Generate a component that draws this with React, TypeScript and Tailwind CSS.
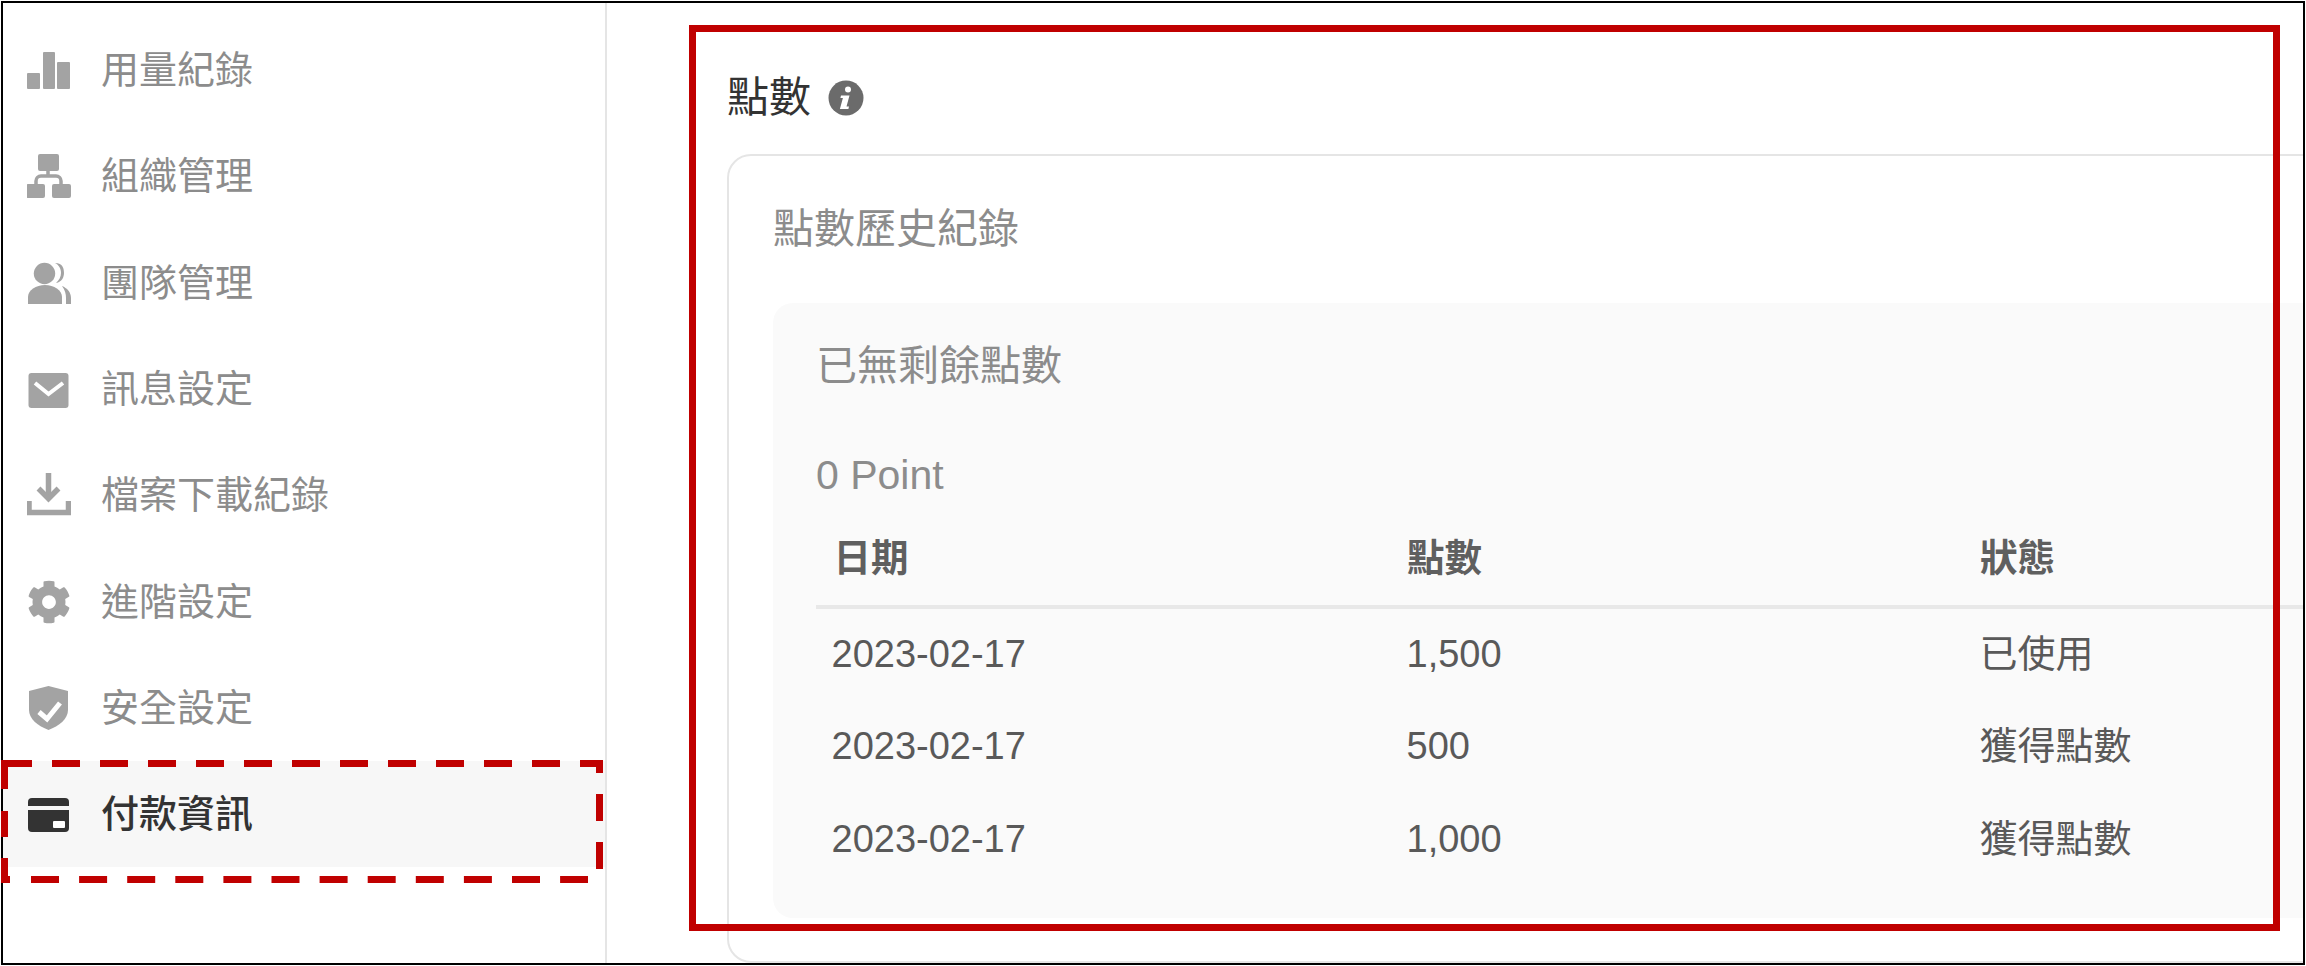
import React from "react";
import { FaCog } from "react-icons/fa";

const G = "#a3a3a3";

function Svg({ children }: { children: React.ReactNode }) {
  return (
    <svg width="44" height="44" viewBox="0 0 44 44" className="shrink-0">
      {children}
    </svg>
  );
}

const ChartIcon = () => (
  <Svg>
    <g fill={G}>
      <rect x="0" y="25" width="13" height="16" rx="1" />
      <rect x="16" y="4" width="12" height="37" rx="1" />
      <rect x="30" y="14" width="13" height="27" rx="1" />
    </g>
  </Svg>
);
const OrgIcon = () => (
  <Svg>
    <g fill={G}>
      <rect x="11" y="0" width="21" height="17" rx="2" />
      <rect x="-1" y="30" width="19" height="14" rx="2" />
      <rect x="25" y="30" width="19" height="14" rx="2" />
    </g>
    <path d="M21 16v5M9 31v-4a5 5 0 0 1 5-5h15a5 5 0 0 1 5 5v4" fill="none" stroke={G} strokeWidth="3.5" />
  </Svg>
);
const TeamIcon = () => (
  <Svg>
    <g fill={G}>
      <circle cx="17.5" cy="12.5" r="10.7" />
      <path d="M1 43v-7c0-7 8-12 17-12s17 5 17 12v7z" />
      <path d="M28 2c8 0 9 6 9 10s-2 9-8 10c3-3 5-6 5-10s-2-8-6-10z" />
      <path d="M35 25c5 2 9 6 9 12v6h-5v-6c0-4-1-8-4-12z" />
    </g>
  </Svg>
);
const MailIcon = () => (
  <Svg>
    <rect x="1.5" y="6" width="40" height="35" rx="3" fill={G} />
    <path d="M8 16l13.5 11L36 16" fill="none" stroke="#fff" strokeWidth="4" />
  </Svg>
);
const DownloadIcon = () => (
  <Svg>
    <g fill="none" stroke={G} strokeWidth="5.5">
      <path d="M21.5 0v25" />
      <path d="M11.5 15.5l10 10 10-10" />
      <path d="M2 28v11.5h39.500V28" />
    </g>
  </Svg>
);
const GearIcon = () => <FaCog size={44} color={G} className="shrink-0" />;
const ShieldIcon = () => (
  <Svg>
    <path d="M21.500 0L41 5v19c0 9-9 16-19.500 20C11 40 2 33 2 24V5z" fill={G} />
    <path d="M12 26l8 7 13-16" fill="none" stroke="#fff" strokeWidth="5" />
  </Svg>
);
const CardIcon = () => (
  <Svg>
    <path d="M1 14v-4a4 4 0 0 1 4-4h33a4 4 0 0 1 4 4v4z" fill="#333" />
    <path d="M1 18h41v18a4 4 0 0 1-4 4H5a4 4 0 0 1-4-4z" fill="#333" />
    <rect x="26" y="29" width="12" height="7" rx="1" fill="#fff" />
  </Svg>
);
const InfoIcon = () => (
  <svg width="36" height="36" viewBox="0 0 36 36" className="shrink-0">
    <circle cx="18" cy="18" r="17.500" fill="#6b6b6b" />
    <circle cx="20" cy="9.500" r="3" fill="#fff" />
    <path d="M13 15.500h8.500l-3 11h2.500l-.6 2.500h-8.500l3-11H12.400z" fill="#fff" />
  </svg>
);

const items: { label: string; icon: React.ReactNode; active?: boolean }[] = [
  { label: "用量紀錄", icon: <ChartIcon /> },
  { label: "組織管理", icon: <OrgIcon /> },
  { label: "團隊管理", icon: <TeamIcon /> },
  { label: "訊息設定", icon: <MailIcon /> },
  { label: "檔案下載紀錄", icon: <DownloadIcon /> },
  { label: "進階設定", icon: <GearIcon /> },
  { label: "安全設定", icon: <ShieldIcon /> },
  { label: "付款資訊", icon: <CardIcon />, active: true },
];

const rows = [
  { h: "h-[90px]", c: ["2023-02-17", "1,500", "已使用"] },
  { h: "h-[93.5px]", c: ["2023-02-17", "500", "獲得點數"] },
  { h: "h-[93.5px]", c: ["2023-02-17", "1,000", "獲得點數"] },
];

export default function App() {
  return (
    <div className="relative w-[2306px] h-[966px] p-px bg-white [font-family:'Liberation_Sans','Noto_Sans_CJK_TC',sans-serif]">
      <div className="flex h-[964px] w-[2304px] overflow-hidden border-2 border-black">
        <aside className="w-[604px] shrink-0 border-r-2 border-[#e5e5e5] pt-[14px]">
          {items.map((it) => (
            <div
              key={it.label}
              className={
                it.active
                  ? "flex h-[106.3px] items-center gap-[30px] bg-[#f7f7f7] pl-[24px] text-[38px] font-medium text-[#333]"
                  : "flex h-[106.3px] items-center gap-[30px] pl-[24px] text-[38px] text-[#8c8c8c]"
              }
            >
              {it.icon}
              <span className="leading-none">{it.label}</span>
            </div>
          ))}
        </aside>
        <main className="min-w-0 flex-1 pl-[120px] pt-[70px]">
          <div className="flex h-[50px] items-center gap-[17px] text-[42px] leading-none text-[#333]">
            <span>點數</span>
            <InfoIcon />
          </div>
          <section className="mt-[31px] h-[809px] w-[1700px] rounded-[24px] border-2 border-[#e5e5e5] pl-[44px] pt-[48px]">
            <div className="flex h-[50px] items-center text-[41px] leading-none text-[#8c8c8c]">點數歷史紀錄</div>
            <div className="mt-[49px] h-[615px] rounded-[20px] bg-[#fafafa] pl-[43px] pt-[38px]">
              <div className="flex h-[50px] items-center text-[41px] leading-none text-[#8c8c8c]">已無剩餘點數</div>
              <div className="mt-[59px] flex h-[50px] items-center text-[41px] leading-none text-[#8c8c8c]">0 Point</div>
              <div className="mt-[35px] grid h-[74px] grid-cols-[573.5px_573px_1fr] border-b-4 border-[#e8e8e8] pb-[23px] pl-[17.5px] text-[37.5px] font-bold leading-none text-[#5f5f5f]">
                <div className="flex items-center">日期</div>
                <div className="flex items-center">點數</div>
                <div className="flex items-center">狀態</div>
              </div>
              {rows.map((r, i) => (
                <div key={i} className={`grid ${r.h} grid-cols-[575px_573px_1fr] pl-[15.5px] text-[38px] leading-none text-[#595959]`}>
                  <div className="flex items-center">{r.c[0]}</div>
                  <div className="flex items-center">{r.c[1]}</div>
                  <div className="flex items-center">{r.c[2]}</div>
                </div>
              ))}
            </div>
          </section>
        </main>
      </div>

      <div className="absolute left-[689px] top-[25px] h-[906px] w-[1591px] border-[7px] border-[#c00000]" />
      <svg className="absolute left-0 top-0" width="2306" height="966" fill="none" stroke="#c00000" strokeWidth="7">
        <line x1="4" y1="763.5" x2="603" y2="763.5" strokeDasharray="28 20" />
        <line x1="599.5" y1="760" x2="599.5" y2="869" strokeDasharray="27 21" strokeDashoffset="14" />
        <line x1="31" y1="879.5" x2="588" y2="879.5" strokeDasharray="28 20.100" />
        <line x1="1" y1="879.5" x2="10" y2="879.5" />
        <line x1="4.5" y1="760" x2="4.500" y2="883" strokeDasharray="29 22 26 21 25" />
      </svg>
    </div>
  );
}
